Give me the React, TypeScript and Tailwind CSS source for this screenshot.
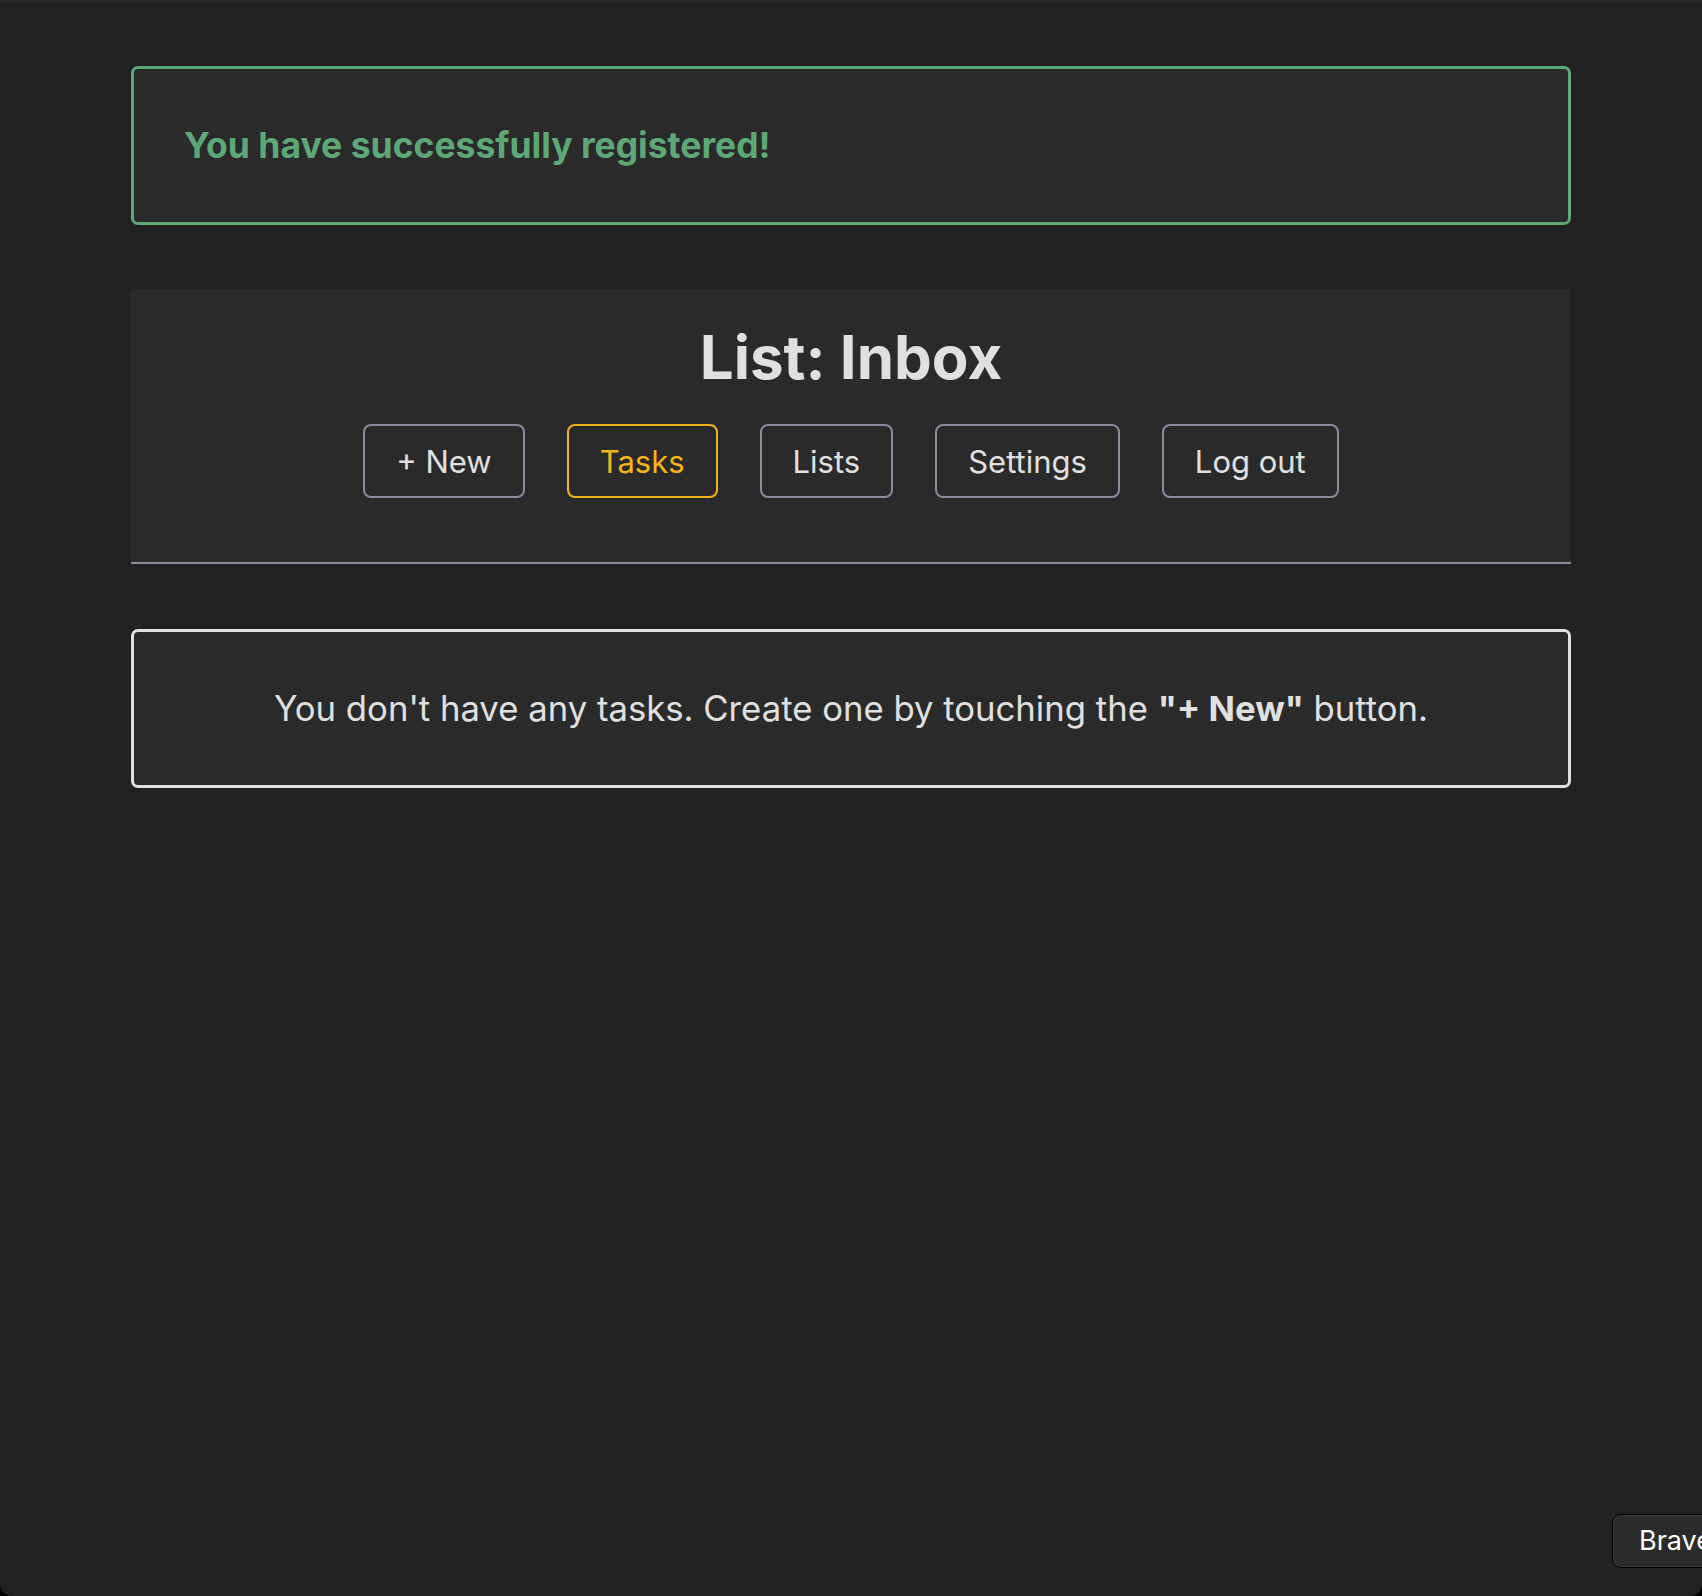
import React from 'react';

const navItems = [
  { label: '+ New', active: false },
  { label: 'Tasks', active: true },
  { label: 'Lists', active: false },
  { label: 'Settings', active: false },
  { label: 'Log out', active: false },
];

const App = () => {
  return (
    <div className="bg-black">
      <div
        className="relative h-[1596px] overflow-hidden rounded-b-[12px] border-t-2 border-[#26282c] bg-[#212121] text-[#e0e0e0]"
        style={{ fontFamily: 'Inter, "Noto Sans", sans-serif' }}
      >
        <div className="mx-auto flex w-[1440px] flex-col pt-[64px]">
          {/* flash message */}
          <div className="flex h-[159px] items-center rounded-[7px] border-[3px] border-[#5ea877] bg-[#2a2a2a] px-[50px]">
            <p className="text-[35.5px] font-bold leading-none text-[#5ea877]">You have successfully registered!</p>
          </div>

          {/* header */}
          <header className="mt-[64px] flex flex-col items-center border-b-2 border-[#8a8c9e] bg-[#2a2a2a] pt-[38px] pb-[64px]">
            <h1 className="text-[60px] font-bold leading-none">List: Inbox</h1>
            <nav className="mt-[37px] flex gap-[42px]">
              {navItems.map((item) => (
                <button
                  key={item.label}
                  className={
                    item.active
                      ? 'flex h-[74px] items-center rounded-[8px] border-2 border-[#f2b21b] px-[31px] text-[31px] leading-none text-[#f4b41a]'
                      : 'flex h-[74px] items-center rounded-[8px] border-2 border-[#8a8c9e] px-[31px] text-[31px] leading-none text-[#e0e0e0]'
                  }
                >
                  {item.label}
                </button>
              ))}
            </nav>
          </header>

          {/* empty state */}
          <div className="mt-[65px] flex h-[159px] items-center justify-center rounded-[7px] border-[3px] border-[#e0e0e0] bg-[#2a2a2a]">
            <p className="text-[34.7px] leading-none">
              You don't have any tasks. Create one by touching the <strong className="font-bold">"+ New"</strong> button.
            </p>
          </div>
        </div>

        {/* browser toast */}
        <div className="absolute left-[1612px] top-[1512px] flex h-[54px] w-[140px] items-center rounded-[9px] border border-black bg-[#2b2b2b] pl-[26px] text-[27px] text-white shadow-[inset_0_0_0_1px_#3a3a3a]">
          Brave
        </div>
      </div>
    </div>
  );
};

export default App;
